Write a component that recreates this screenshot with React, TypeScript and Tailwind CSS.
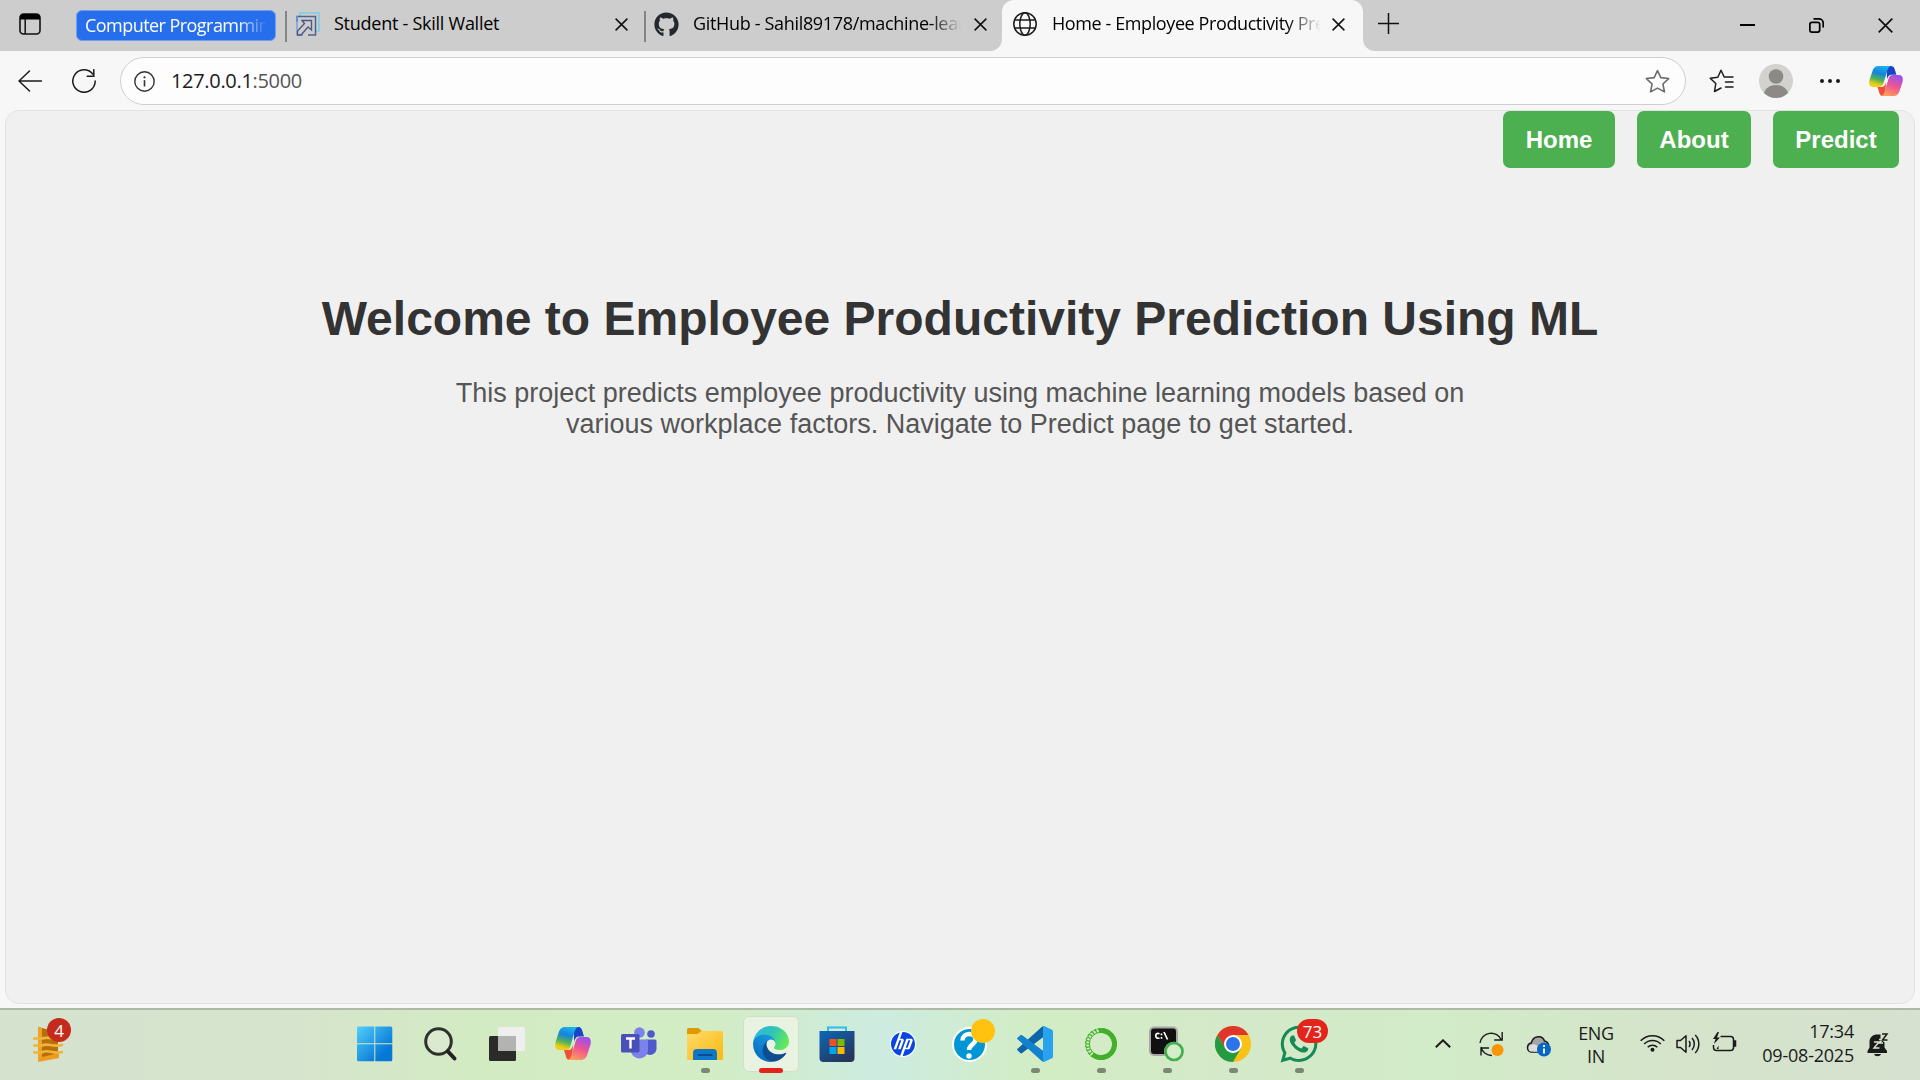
import React from 'react';
import type { ReactNode } from 'react';
import { FaGithub, FaWhatsapp } from 'react-icons/fa';
import { SiHp } from 'react-icons/si';

const UI = "font-['Open_Sans',sans-serif]";

function Copilot({ id, className }: { id: string; className: string }) {
  return (
    <svg viewBox="0 0 36 33" className={className} preserveAspectRatio="none">
      <defs>
        <linearGradient id={id + 'a'} x1="0.6" y1="0" x2="0.3" y2="1">
          <stop offset="0" stopColor="#19b5ea" />
          <stop offset="0.35" stopColor="#1682e2" />
          <stop offset="0.65" stopColor="#4fb257" />
          <stop offset="0.9" stopColor="#f0ce12" />
        </linearGradient>
        <linearGradient id={id + 'b'} x1="0.7" y1="0" x2="0.3" y2="1">
          <stop offset="0" stopColor="#9a50f0" />
          <stop offset="0.5" stopColor="#ee5591" />
          <stop offset="1" stopColor="#ffa05a" />
        </linearGradient>
      </defs>
      <path d="M19 0h4.500c2.500 0 3.500 2.500 4 4.500L29 9.500h-5c-3 0-4 2-5 5z" fill="#1744c8" />
      <path d="M9 23h5c2 0 3-2 4-5l-1 15h-2.500c-2.500 0-3.500-3-4-5z" fill="#f04f38" />
      <path d="M10.500 0H24c-3 0-4 3-5 6.500L15.500 18.500c-1 3-2 4.500-5 4.500H4.500C.5 23-.5 19.500.6 15L3.700 5.500C5 1.500 7 0 10.500 0z" fill={`url(#${id}a)`} />
      <path d="M25.500 33H12c3 0 4-3 5-6.500L20.500 14.500c1-3 2-4.500 5-4.500h6c4 0 5 3.500 3.900 8l-3.100 9.500C31 31.500 29 33 25.500 33z" fill={`url(#${id}b)`} />
    </svg>
  );
}

function CloseX({ className }: { className: string }) {
  return (
    <svg viewBox="0 0 13 13" className={className} stroke="#111" strokeWidth="1.5" fill="none">
      <path d="M.6.600 12.400 12.400M12.400.600.600 12.400" />
    </svg>
  );
}

const StarPath = 'M12 1.500 15.200 8.300 22.700 9.200 17.200 14.400 18.700 22 12 18.300 5.300 22 6.800 14.400 1.300 9.200 8.800 8.300z';

function TabStrip() {
  return (
    <div className={`flex h-[51px] bg-[#cdcdcd] text-[18px] text-black ${UI}`}>
      <svg viewBox="0 0 22 22" className="ml-[19px] mt-[13px] h-[22px] w-[22px] shrink-0" fill="none">
        <rect x="1" y="1" width="20" height="20" rx="3.500" stroke="#111" strokeWidth="1.600" />
        <path d="M1 6.500V4.500A3.500 3.500 0 0 1 4.500 1h13A3.500 3.500 0 0 1 21 4.500v2z" fill="#000" />
        <path d="M6.200 6v15" stroke="#111" strokeWidth="1.500" />
      </svg>
      <div className="ml-[35px] mt-[10px] h-[31px] w-[200px] shrink-0 overflow-hidden rounded-[6px] border border-[#6f9df0] bg-[#276eec] pl-[8px] text-white">
        <div className="w-[182px] overflow-hidden whitespace-nowrap leading-[29px] tracking-[-0.55px] [mask-image:linear-gradient(to_right,black_84%,transparent)]">Computer Programming</div>
      </div>
      <div className="ml-[9px] mt-[11px] h-[31px] w-[2px] shrink-0 bg-[#858585]" />
      <svg viewBox="0 0 24 24" className="ml-[9px] mt-[12px] h-[24px] w-[24px] shrink-0" fill="none">
        <path d="M4 4V1h19v18h-3" stroke="#7fcbe6" strokeWidth="1.600" />
        <path d="M1 10V4.500h18.500V23H12" stroke="#526091" strokeWidth="1.500" />
        <path d="M1 4v19M1 23h6" stroke="#6c9be0" strokeWidth="1.300" />
        <path d="M6 8.500h9.500V18l-3.500-3-7 8H1.500v-4l7-7.500z" stroke="#4e5982" strokeWidth="1.400" />
      </svg>
      <span className="ml-[14px] mt-[8px] w-[281px] whitespace-nowrap leading-[30px] tracking-[-0.26px]">Student - Skill Wallet</span>
      <CloseX className="mt-[18px] h-[13px] w-[13px] shrink-0" />
      <div className="ml-[16px] mt-[11px] h-[31px] w-[2px] shrink-0 bg-[#858585]" />
      <FaGithub className="ml-[8px] mt-[12px] h-[25px] w-[25px] shrink-0 text-[#24292f]" />
      <span className="ml-[14px] mt-[8px] w-[268px] overflow-hidden whitespace-nowrap leading-[30px] tracking-[-0.33px] [mask-image:linear-gradient(to_right,black_88%,transparent)]">GitHub - Sahil89178/machine-lear</span>
      <CloseX className="ml-[13px] mt-[18px] h-[13px] w-[13px] shrink-0" />
      <div className="ml-[3px] h-[51px] w-[12px] shrink-0 bg-[#f7f7f7]"><div className="h-full rounded-br-[12px] bg-[#cdcdcd]" /></div>
      <div className="h-[51px] w-[361px] shrink-0 bg-[#cdcdcd]">
        <div className="flex h-full rounded-t-[12px] bg-[#f7f7f7]">
          <svg viewBox="0 0 24 24" className="ml-[11px] mt-[12px] h-[24px] w-[24px] shrink-0" fill="none" stroke="#1b1b1b" strokeWidth="1.500">
            <circle cx="12" cy="12" r="11.200" />
            <ellipse cx="12" cy="12" rx="5.200" ry="11.200" />
            <path d="M1.800 8h20.400M1.800 16h20.400" />
          </svg>
          <span className="ml-[15px] mt-[8px] w-[269px] overflow-hidden whitespace-nowrap leading-[30px] tracking-[-0.4px] [mask-image:linear-gradient(to_right,black_87%,transparent)]">Home - Employee Productivity Pred</span>
          <CloseX className="ml-[11px] mt-[18px] h-[13px] w-[13px] shrink-0" />
        </div>
      </div>
      <div className="h-[51px] w-[12px] shrink-0 bg-[#f7f7f7]"><div className="h-full rounded-bl-[12px] bg-[#cdcdcd]" /></div>
      <svg viewBox="0 0 21 21" className="ml-[3px] mt-[13px] h-[21px] w-[21px] shrink-0" stroke="#111" strokeWidth="1.500"><path d="M10.500 0v21M0 10.500h21" /></svg>
      <div className="ml-auto mt-[24px] h-[2px] w-[15px] bg-black" />
      <svg viewBox="0 0 15 15" className="ml-[54px] mt-[18px] h-[15px] w-[15px]" fill="none" stroke="#000" strokeWidth="1.700">
        <rect x=".9" y="4.300" width="9.800" height="9.800" rx="2" />
        <path d="M4.500.900h5.500a4.200 4.200 0 0 1 4.200 4.200v4.500" />
      </svg>
      <CloseX className="ml-[54px] mr-[27px] mt-[18px] h-[15px] w-[15px]" />
    </div>
  );
}

function Toolbar() {
  return (
    <div className={`flex h-[59px] items-center pt-px text-[#1b1b1b] ${UI}`}>
      <svg viewBox="0 0 24 22" className="ml-[18px] h-[22px] w-[24px]" fill="none" stroke="#1b1b1b" strokeWidth="1.500" strokeLinecap="round" strokeLinejoin="round"><path d="M11.500 1 1 11l10.500 10M1 11h22.500" /></svg>
      <svg viewBox="0 0 24 24" className="ml-[30px] h-[24px] w-[24px]" fill="none" stroke="#1b1b1b" strokeWidth="1.500" strokeLinecap="round"><path d="M23.200 12A11.200 11.200 0 1 1 20.700 5M15.200 7.200h6.600V.700" /></svg>
      <div className="ml-[24px] flex h-[48px] w-[1566px] items-center rounded-full border-[1.5px] border-[#cfcfcf] bg-[#fdfdfd]">
        <svg viewBox="0 0 21 21" className="ml-[13px] h-[21px] w-[21px]" fill="none" stroke="#333" strokeWidth="1.400"><circle cx="10.500" cy="10.500" r="9.700" /><path d="M10.500 9.200v6.300" strokeWidth="1.600" /><circle cx="10.500" cy="6.300" r="1.100" fill="#333" stroke="none" /></svg>
        <span className="ml-[16px] text-[20px] leading-[28px] tracking-[-0.32px]">127.0.0.1<span className="text-[#555]">:5000</span></span>
        <svg viewBox="0 0 24 24" className="ml-auto mr-[15px] h-[25px] w-[25px]" fill="none" stroke="#6a6a6a" strokeWidth="1.500" strokeLinejoin="round"><path d={StarPath} /></svg>
      </div>
      <svg viewBox="0 0 25 24" className="ml-[23px] h-[24px] w-[25px]" fill="none" stroke="#1b1b1b" strokeWidth="1.500" strokeLinejoin="round" strokeLinecap="round"><path d="M12 19 5.500 22.500 6.800 14.500 1.200 9.200 8.800 8.200 12 1.300 15.200 8h8.800M16.500 13H24M16.500 18H24" /></svg>
      <svg viewBox="0 0 34 34" className="ml-[25px] h-[34px] w-[34px]"><circle cx="17" cy="17" r="17" fill="#d3d2cf" /><circle cx="17" cy="12.500" r="7.300" fill="#8c8987" /><path d="M5 29c1.500-4.800 6-8 12-8s10.500 3.200 12 8A17 17 0 0 1 5 29z" fill="#8c8987" /></svg>
      <div className="ml-[27px] flex gap-1"><i className="h-[4px] w-[4px] rounded-full bg-[#1b1b1b]" /><i className="h-[4px] w-[4px] rounded-full bg-[#1b1b1b]" /><i className="h-[4px] w-[4px] rounded-full bg-[#1b1b1b]" /></div>
      <Copilot id="cpt" className="ml-[29px] h-[30px] w-[34px]" />
    </div>
  );
}

function Page() {
  return (
    <main className="ml-[5px] mr-[5px] h-[894px] overflow-hidden rounded-[14px] border border-[#e2e2e2] bg-[#f0f0f0] font-['Liberation_Sans',Arial,sans-serif]">
      <nav className="flex h-[57px] justify-end gap-[22px] pr-[15px] text-[24px] font-bold leading-[27px] text-white">
        <a className="w-[112px] rounded-[7px] bg-[#4caf50] py-[15px] text-center">Home</a>
        <a className="w-[114px] rounded-[7px] bg-[#4caf50] py-[15px] text-center">About</a>
        <a className="w-[126px] rounded-[7px] bg-[#4caf50] py-[15px] text-center">Predict</a>
      </nav>
      <h1 className="mt-[123px] text-center text-[48px] font-bold leading-[55px] text-[#333]">Welcome to Employee Productivity Prediction Using ML</h1>
      <p className="mx-auto mt-[32px] w-[1050px] text-center text-[27px] leading-[31px] text-[#555]">This project predicts employee productivity using machine learning models based on various workplace factors. Navigate to Predict page to get started.</p>
    </main>
  );
}

function Badge({ className, children }: { className: string; children?: ReactNode }) {
  return <span className={`absolute flex h-[24px] items-center justify-center rounded-full text-[17px] leading-none text-white ${className}`}>{children}</span>;
}

function TaskbarItem({ children, running, active }: { children: ReactNode; running?: boolean; active?: boolean }) {
  return (
    <div className="flex w-[66px] justify-center">
      <div className={active ? 'relative mt-[6px] flex h-[56px] w-[56px] justify-center rounded-[6px] border border-[#cfe0c6] bg-[#e8f4e1] pt-[9px]' : 'relative mt-[6px] flex h-[56px] w-[56px] justify-center pt-[10px]'}>
        {children}
        {running && <span className="absolute -bottom-px h-[5px] w-[9px] rounded-full bg-[#7b8873]" />}
        {active && <span className="absolute -bottom-[2px] h-[5px] w-[24px] rounded-full bg-[#e3241b]" />}
      </div>
    </div>
  );
}

const icon = 'h-[36px] w-[36px] shrink-0';

function Taskbar() {
  return (
    <footer className={`flex h-[72px] border-t-2 border-[#adb8a5] bg-[linear-gradient(90deg,#d5e2ce_0%,#d6e4cd_15%,#d3ebc3_25%,#d2edc4_37%,#cdebe0_46%,#d2edc4_54%,#d4e9c9_64%,#d2ebc8_75%,#d5e4cb_87%,#d6e1cf_100%)] text-[#1b1b1b] ${UI}`}>
      <div className="relative h-[70px] w-[342px] shrink-0">
        <svg viewBox="0 0 30 36" className="ml-[33px] mt-[16px] h-[36px] w-[30px]" fill="none">
          <path d="M5 1 25 6v25L5 35z" fill="#b86f0a" />
          <path d="M5 .5 9 2v32l-4 1.500z" fill="#f0a12c" />
          <path d="M9 31 26 27v5L5 36z" fill="#ef9a20" />
          <path d="M1 12.500h8c4-2 8 1 20-1M1 19.500h8c6-3 10 2 20-.5M1 26.500h8c6-4 10 2 20-.5" stroke="#efb53a" strokeWidth="2.700" strokeLinecap="round" />
        </svg>
        <Badge className="left-[47px] top-[8px] w-[24px] bg-[#c42b1c]">4</Badge>
      </div>
      <TaskbarItem>
        <svg viewBox="0 0 36 36" className="-ml-px h-[36px] w-[36px] shrink-0">
          <defs><linearGradient id="win" gradientUnits="userSpaceOnUse" x1="0" y1="0" x2="36" y2="36"><stop offset="0" stopColor="#52d0fb" /><stop offset=".75" stopColor="#0878d6" /></linearGradient></defs>
          <path d="M1.500.500h15.800v16.800H0V2A1.500 1.500 0 0 1 1.500.500zM18.300.500h15.500A1.500 1.500 0 0 1 35.300 2v15.300h-17zM0 18.300h17.300v17H1.500A1.500 1.500 0 0 1 0 33.800zM18.300 18.300h17v15.500a1.500 1.500 0 0 1-1.500 1.500H18.300z" fill="url(#win)" />
        </svg>
      </TaskbarItem>
      <TaskbarItem>
        <svg viewBox="0 0 36 36" className={icon} fill="none"><circle cx="15.500" cy="15.500" r="12.800" stroke="#2e302e" strokeWidth="3" fill="#dbeacf" /><path d="m25 25.500 6.500 7" stroke="#222" strokeWidth="4" strokeLinecap="round" /></svg>
      </TaskbarItem>
      <TaskbarItem>
        <svg viewBox="0 0 36 36" className={icon}><rect y="10" width="27" height="25" rx="1.500" fill="#2b2b29" /><rect x="9" y="1" width="27" height="24" rx="1.500" fill="#efefef" /><path d="M9 10h18v15H10.500A1.500 1.500 0 0 1 9 23.500z" fill="#b3b3b1" /></svg>
      </TaskbarItem>
      <TaskbarItem><Copilot id="cpb" className="mt-px h-[33px] w-[36px] shrink-0" /></TaskbarItem>
      <TaskbarItem>
        <svg viewBox="0 0 36 36" className={icon}>
          <circle cx="18.500" cy="6.500" r="5.300" fill="#7b83eb" /><circle cx="30" cy="8" r="3.800" fill="#5059c9" />
          <path d="M25 13.500h9a1.500 1.500 0 0 1 1.500 1.500v7.500a6.500 6.500 0 0 1-10.500 5z" fill="#5059c9" />
          <path d="M10 13.500h15.500A1.500 1.500 0 0 1 27 15v10a8.700 8.700 0 0 1-17 1z" fill="#7b83eb" />
          <rect y="8" width="18.500" height="18.500" rx="1.500" fill="#4950b8" />
          <path d="M5 12.500h9M9.500 12.500v10" stroke="#fff" strokeWidth="2.400" />
        </svg>
      </TaskbarItem>
      <TaskbarItem running>
        <svg viewBox="0 0 36 36" className={icon}>
          <defs><linearGradient id="fold" x1="0" y1="0" x2="1" y2="1"><stop offset="0" stopColor="#ffda6b" /><stop offset="1" stopColor="#fbb90c" /></linearGradient></defs>
          <path d="M0 8V3.500A1.500 1.500 0 0 1 1.500 2h10l4 3.500-4 3.500z" fill="#dd9a05" />
          <path d="M0 8h10.500l4-3h20A1.500 1.500 0 0 1 36 6.500v26a1.500 1.500 0 0 1-1.500 1.500h-33A1.500 1.500 0 0 1 0 32.500z" fill="url(#fold)" />
          <path d="M6 34v-7a4 4 0 0 1 4-4h16a4 4 0 0 1 4 4v7z" fill="#0f77c8" /><path d="M11.500 29h13" stroke="#0b4c8c" strokeWidth="2" strokeLinecap="round" />
        </svg>
      </TaskbarItem>
      <TaskbarItem active>
        <svg viewBox="0 0 256 256" className={icon}>
          <defs>
            <linearGradient id="e1" x1="0" y1="0" x2="1" y2="0"><stop offset="0" stopColor="#0d5093" /><stop offset="1" stopColor="#114a8b" /></linearGradient>
            <linearGradient id="e2" x1=".8" y1="0" x2=".3" y2="1"><stop offset="0" stopColor="#1b9de2" /><stop offset="1" stopColor="#0669bc" /></linearGradient>
            <linearGradient id="e3" x1="0" y1=".2" x2="1" y2=".6"><stop offset="0" stopColor="#2fb5e8" /><stop offset=".5" stopColor="#31c5b5" /><stop offset="1" stopColor="#66eb53" /></linearGradient>
          </defs>
          <g transform="translate(-4.630 -4.920)">
            <path fill="url(#e1)" d="M235.680 195.460a93.730 93.730 0 0 1-10.540 4.710 101.870 101.870 0 0 1-35.900 6.460c-47.320 0-88.540-32.550-88.540-74.320A31.480 31.480 0 0 1 117.130 105c-42.800 1.800-53.800 46.400-53.800 72.530 0 73.880 68.090 81.370 82.760 81.370 7.910 0 19.840-2.300 27-4.560l1.310-.44a128.340 128.340 0 0 0 66.600-52.800 4 4 0 0 0-5.320-5.640z" />
            <path fill="url(#e2)" d="M110.340 246.340A79.200 79.200 0 0 1 87.600 225a80.720 80.720 0 0 1 29.530-120c3.120-1.470 8.450-4.130 15.540-4a32.350 32.350 0 0 1 25.690 13 31.880 31.880 0 0 1 6.360 18.660c0-.21 24.460-79.600-80-79.600-43.900 0-80 41.660-80 78.210a130.150 130.150 0 0 0 12.110 56 128 128 0 0 0 156.380 67.110 75.550 75.550 0 0 1-62.780-8z" />
            <path fill="url(#e3)" d="M156.940 153.780c-.81 1.050-3.300 2.500-3.300 5.660 0 2.610 1.700 5.120 4.720 7.230 14.380 10 41.490 8.680 41.560 8.680a59.560 59.560 0 0 0 30.270-8.350 61.380 61.380 0 0 0 30.430-52.880c.26-22.410-8-37.310-11.340-43.910C228.090 28.760 182.350 4.920 132.610 4.920a128 128 0 0 0-128 126.200c.48-36.540 36.800-66.050 80-66.050 3.500 0 23.460.34 42 10.070 16.340 8.580 24.900 18.940 30.850 29.210 6.180 10.670 7.280 24.150 7.280 29.520s-2.740 13.330-7.800 19.910z" />
          </g>
        </svg>
      </TaskbarItem>
      <TaskbarItem>
        <svg viewBox="0 0 36 36" className={icon}>
          <defs><linearGradient id="store" x1="0" y1="0" x2=".7" y2="1"><stop offset="0" stopColor="#0d68b8" /><stop offset="1" stopColor="#26355c" /></linearGradient></defs>
          <path d="M9 7V1.500h18V7" stroke="#29bdf0" strokeWidth="2" fill="none" />
          <path d="M.5 5h35v27a4 4 0 0 1-4 4h-27a4 4 0 0 1-4-4z" fill="url(#store)" />
          <path d="M10.500 13h7v7h-7z" fill="#f25022" /><path d="M18.500 13h7v7h-7z" fill="#7fba00" /><path d="M10.500 21h7v7h-7z" fill="#00a4ef" /><path d="M18.500 21h7v7h-7z" fill="#ffb900" />
        </svg>
      </TaskbarItem>
      <TaskbarItem><div className="mt-[5px] flex h-[26px] w-[26px] items-center justify-center rounded-full bg-white"><SiHp className="h-[24px] w-[24px] text-[#0a45e0]" /></div></TaskbarItem>
      <TaskbarItem>
        <div className="mt-px flex h-[35px] w-[35px] items-center justify-center rounded-full border-2 border-white bg-[#0096d6]"><svg viewBox="0 0 20 28" className="h-[28px] w-[20px]" fill="none" stroke="#fff" strokeWidth="4.500"><path d="M3.500 9.500C3.500 1 16.500 1 16.500 8.500c0 5-6.500 5-6.500 10.500" /><circle cx="10" cy="25" r="2.700" fill="#fff" stroke="none" /></svg></div>
        <Badge className="left-[30px] top-[3px] w-[24px] bg-[#ffc20e]" />
      </TaskbarItem>
      <TaskbarItem running>
        <svg viewBox="0 0 36 36" className={icon}>
          <path d="M.8 24.500a1.200 1.200 0 0 1 0-2L25 .8 27 0v10.500L5.200 27a1.600 1.600 0 0 1-2 0z" fill="#0f65a9" />
          <path d="M.8 11.500 3.200 9.300a1.600 1.600 0 0 1 2 0L27 25.500V36l-2-.8L.8 13.500a1.200 1.200 0 0 1 0-2z" fill="#1382cc" />
          <path d="m27 0 8 3.800a2 2 0 0 1 1 1.700v25a2 2 0 0 1-1 1.700L27 36c-.7 0-1-.3-1-1V1c0-.7.3-1 1-1z" fill="#29a3f0" />
        </svg>
      </TaskbarItem>
      <TaskbarItem running>
        <svg viewBox="0 0 36 36" className={icon} fill="none" stroke="#43b02a"><path d="M16 4.700A13.500 13.500 0 1 1 9.500 28.500" strokeWidth="4.800" /><circle cx="18" cy="18" r="15.300" strokeWidth="1.300" strokeDasharray="3 1" /><circle cx="18" cy="18" r="11.700" strokeWidth="1" /><circle cx="18" cy="18" r="13.500" strokeWidth="3.500" strokeDasharray="1.200 2" /></svg>
      </TaskbarItem>
      <TaskbarItem running>
        <svg viewBox="0 0 36 36" className={icon}>
          <rect x="1" y="1.500" width="27" height="27.500" rx="4" fill="#111" stroke="#aaa6a8" strokeWidth="2" />
          <g fill="none" stroke="#fff" strokeWidth="1.700"><path d="M10.500 7.800c-5-2.200-5 6 0 4.200M15 6l3.500 7.500" /><path d="M12.500 7.500v1.700M12.500 11v1.700" /></g>
          <circle cx="25" cy="25.500" r="9.800" fill="#c3e4b8" /><circle cx="25" cy="25.500" r="8.500" fill="#d5edc9" stroke="#43b04f" strokeWidth="2.700" />
        </svg>
      </TaskbarItem>
      <TaskbarItem running>
        <svg viewBox="0 0 36 36" className={icon}>
          <circle cx="18" cy="18" r="18" fill="#fbc116" />
          <path d="M2.400 9A18 18 0 0 1 33.600 9H18l-7.800 13.500z" fill="#df352b" />
          <path d="M2.400 9A18 18 0 0 0 18 36l7.800-13.500L18 27l-7.800-4.500z" fill="#249a42" />
          <circle cx="18" cy="18" r="9" fill="#fff" /><circle cx="18" cy="18" r="7" fill="#2c72ea" />
        </svg>
      </TaskbarItem>
      <TaskbarItem running>
        <FaWhatsapp className="-mt-[3px] h-[42px] w-[42px] shrink-0 text-[#178a55]" />
        <Badge className="left-[26px] top-[3px] w-[31px] bg-[#e3241b]">73</Badge>
      </TaskbarItem>
      <svg viewBox="0 0 16 9" className="ml-[103px] mt-[29px] h-[9px] w-[16px] shrink-0" fill="none" stroke="#1b1b1b" strokeWidth="2"><path d="m.8 8.300 7.200-7 7.200 7" /></svg>
      <svg viewBox="0 0 25 26" className="ml-[28px] mt-[21px] h-[26px] w-[25px] shrink-0" fill="none" stroke="#1b1b1b" strokeWidth="1.400"><path d="M1 12A11.300 11.300 0 0 1 22.500 9M23.200 1v8h-8M2 16a11 11 0 0 0 11 8.500M2 24.500V17h8" /><circle cx="18.500" cy="19" r="6" fill="#fb9505" stroke="none" /></svg>
      <svg viewBox="0 0 25 22" className="ml-[22px] mt-[25px] h-[22px] w-[25px] shrink-0"><path d="M5 17a4.600 4.600 0 0 1 .3-9C7 .5 16.500-.5 18.500 6c3 .3 4.500 3 4 5.500L17 17z" fill="#a5a5a5" stroke="#1b1b1b" strokeWidth="1.500" /><path d="M4 16.500c-2-2-2-6 1.500-7 4-1 5 .5 8 3.500l2 4z" fill="#ddd" /><circle cx="18" cy="14.500" r="7" fill="#0766c4" /><path d="M18 13.500v5M18 10v2" stroke="#fff" strokeWidth="1.800" /></svg>
      <div className="ml-[23px] mt-[12px] w-[44px] text-center text-[18px] leading-[23px] tracking-[-0.3px]">ENG<br />IN</div>
      <svg viewBox="0 0 25 18" className="ml-[22px] mt-[24px] h-[18px] w-[25px] shrink-0" fill="none" stroke="#1b1b1b" strokeWidth="1.600"><path d="M.7 6.700a16.500 16.500 0 0 1 23.600 0M4.200 10a11.500 11.500 0 0 1 16.600 0M7.700 13.200a6.800 6.800 0 0 1 9.600 0" /><circle cx="12.500" cy="15.700" r="2" fill="#1b1b1b" stroke="none" /></svg>
      <svg viewBox="0 0 24 22" className="ml-[11px] mt-[23px] h-[22px] w-[24px] shrink-0" fill="none" stroke="#1b1b1b" strokeWidth="1.500" strokeLinejoin="round"><path d="M1 7.500h3.500L10 2.800v16.400L4.500 14.500H1zM13 8a5 5 0 0 1 0 6M16 5a9 9 0 0 1 0 12M19.200 2a13 13 0 0 1 0 18" /></svg>
      <svg viewBox="0 0 25 20" className="ml-[12px] mt-[22px] h-[20px] w-[25px] shrink-0" fill="none" stroke="#1b1b1b" strokeWidth="1.500"><path d="M8.500 4.500h10a3 3 0 0 1 3 3v8a3 3 0 0 1-3 3h-14a3 3 0 0 1-3-3V13" /><path d="M22 9h1.500v5H22z" fill="#1b1b1b" /><path d="M5.500 0 1 7h2.500L2 12l6-6.500H5L7 0zM6.500 13.500 4.500 17h2z" fill="#1b1b1b" stroke="none" /></svg>
      <div className="ml-[16px] mt-[9px] w-[101px] text-right text-[18px] leading-[24px] tracking-[-0.22px]">17:34<br />09-08-2025</div>
      <svg viewBox="0 0 22 24" className="ml-[13px] mt-[23px] h-[24px] w-[22px] shrink-0"><path d="M2.500 9C2.500 4 6 1.500 10.500 1.500h3V6l4 3.500v5L20 18v2H.500v-2l2-3.500z" fill="#1b1b1b" /><path d="M7 21h7c-1 3-6 3-7 0z" fill="#1b1b1b" /><path d="M7 9h5l-5 6h5.500M12 6.500h3.500l-3 3.500h3.500" stroke="#dce7d3" strokeWidth="1.400" fill="none" /><path d="M15 1h5l-4.500 6h5" stroke="#1b1b1b" strokeWidth="1.500" fill="none" /></svg>
    </footer>
  );
}

export default function App() {
  return (
    <div className="h-[1080px] w-[1920px] overflow-hidden bg-[#f7f7f7]">
      <TabStrip />
      <Toolbar />
      <Page />
      <div className="h-[4px]" />
      <Taskbar />
    </div>
  );
}
